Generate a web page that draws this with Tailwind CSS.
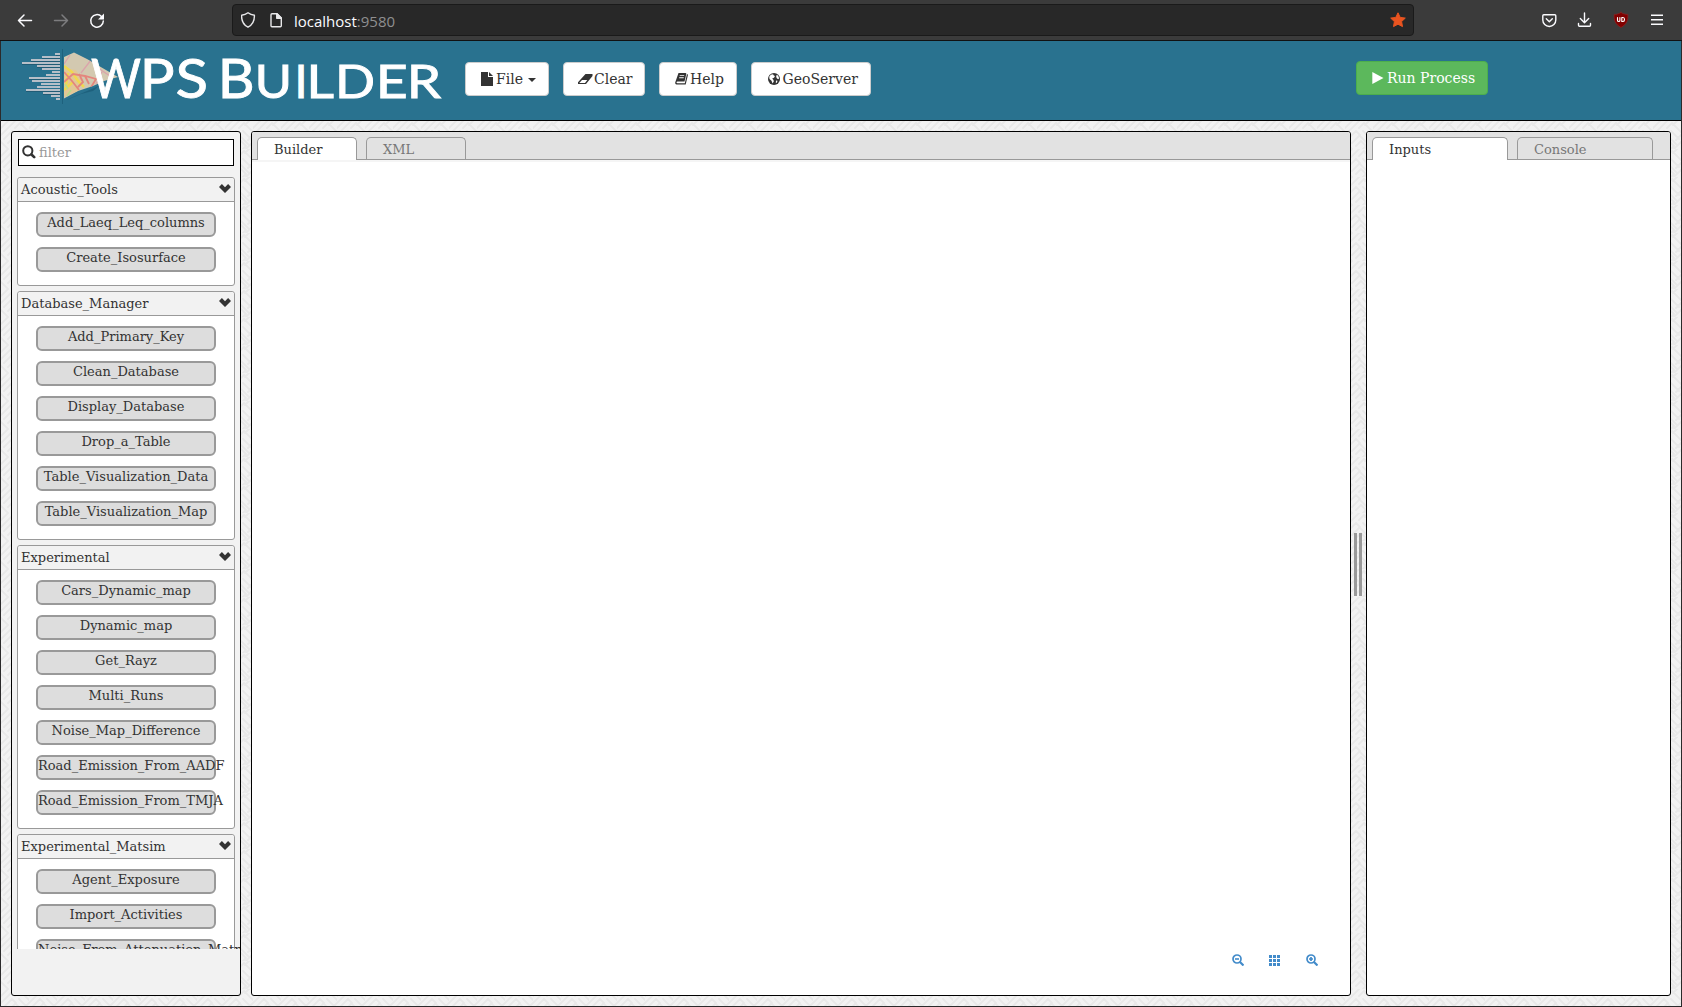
<!DOCTYPE html>
<html lang="en">
<head>
<meta charset="utf-8">
<title>WPS Builder</title>
<script src="https://cdn.jsdelivr.net/npm/@tailwindcss/browser@4"></script>
</head>
<body class="w-[1682px] h-[1007px] overflow-hidden bg-[#2b2a2b] font-['DejaVu_Serif',serif] text-[#333]">
<svg width="0" height="0" class="absolute">
  <defs>
    <symbol id="chev" viewBox="0 0 12 9"><path d="M0 2.900 2.900 0 6 3.200 9.100 0 12 2.900 6 8.900Z"/></symbol>
  </defs>
</svg>
<div class="flex flex-col w-[1682px] h-[1007px] px-px pb-px">
  <!-- browser toolbar -->
  <div class="flex items-center h-[41px] shrink-0 bg-[#3b3b3b] border-b border-[#111] -mx-px pl-4 pr-[18px]">
    <svg class="w-[92px] h-5 shrink-0" viewBox="16 10 92 20" fill="none" stroke="#fbfbfe" stroke-width="1.500" stroke-linecap="round" stroke-linejoin="round">
      <path d="M31.500 20.500H18.500M24 15l-5.500 5.500L24 26"/>
      <path stroke="#7d7d7f" d="M54.500 20.500H67.500M62 15l5.500 5.500L62 26"/>
      <path d="M101.500 16.500A6.300 6.300 0 1 0 103.300 21"/>
      <path fill="#fbfbfe" stroke="none" d="M104 13.500v6h-6Z"/>
    </svg>
    <div class="ml-[124px] w-[1182px] h-8 shrink-0 flex items-center rounded-[4px] bg-[#282828] border border-[#1a1a1a] pl-2 pr-[7px]">
      <svg class="w-[42px] h-5 shrink-0" viewBox="241 10 42 20" fill="none" stroke="#e8e8ea" stroke-width="1.400" stroke-linejoin="round">
        <path d="M248 12.800C250 14.300 252 15 254.400 15.300 254.600 20.500 253.500 24.500 248 27.200 242.500 24.500 241.400 20.500 241.600 15.300 244 15 246 14.300 248 12.800Z"/>
        <path d="M272 13.700h5l4.300 4.300v7.800q0 1-1 1h-8.300q-1 0-1-1v-11.100q0-1 1-1ZM276.800 13.700v4.500h4.500"/><path fill="#e8e8ea" d="M277 13.700v4.300h4.300Z"/>
      </svg>
      <div class="ml-[11px] mt-[2px] font-['Open_Sans',sans-serif] text-[15px] leading-5 text-[#fbfbfe]"><span>localhost</span><span class="text-[#8f8f90]">:9580</span></div>
      <svg class="ml-auto w-4 h-4" viewBox="0 0 16 16" fill="#e95420" stroke="#e95420" stroke-width="1" stroke-linejoin="round"><path d="m8 .8 2.200 4.600 5.100.7-3.700 3.500.9 5L8 12.200 3.500 14.600l.9-5L.7 6.100l5.100-.7Z"/></svg>
    </div>
    <svg class="ml-auto w-[122px] h-5 shrink-0" viewBox="1542 10 122 20" fill="none" stroke="#fbfbfe" stroke-width="1.400" stroke-linecap="round" stroke-linejoin="round">
      <path d="M1543.500 14.700h11q1 0 1 1v4.300a6.500 6.500 0 0 1-13 0v-4.300q0-1 1-1ZM1546 18.700l3 3 3-3" transform="translate(.3 0)"/>
      <path d="M1584.500 13v9.500M1580.300 18.500l4.200 4.200 4.200-4.200M1578.500 23.500v1.700q0 1 1 1h10q1 0 1-1v-1.700"/>
      <path fill="#800000" stroke="#9a2222" stroke-width=".6" d="M1621 12.400c2 1.600 4.600 2 6.800 2 .4 6-1 9.800-6.800 13-5.800-3.200-7.200-7-6.800-13 2.200 0 4.800-.4 6.800-2Z"/>
      <path stroke="#fff" stroke-width="1.100" d="M1617.500 17.500v3q0 1 1.200 1t1.200-1v-3M1621.800 17.500v4h1.200q1.500 0 1.500-2t-1.500-2Z"/>
      <path stroke-linecap="butt" d="M1651 15.200h12M1651 19.700h12M1651 24.200h12"/>
    </svg>
  </div>
  <!-- application header -->
  <header class="flex h-[80px] shrink-0 bg-[#29728f] border-b border-black pl-[19px] pt-[3px]">
    <svg class="w-[430px] h-[66px] shrink-0" viewBox="20 44 430 66">
      <path fill="#14506c" opacity=".5" d="M62 49h1v55h-1zM66 100l28-12 6-3-7 6-12 3-12 5Z"/>
      <path fill="#1a4e66" opacity=".6" d="M56 55h4v1h-4zM42 58h18v1H42zM31 61h29v1H31zM22 64h38v1H22zM37 67h23v1H37zM29 79h31v1H29zM26 91h34v1H26zM43 94h17v1H43z"/>
      <path fill="#b7bfc8" d="M55 53h5v2h-5zM42 56h18v2H42zM31 59h29v2H31zM22 62h38v2H22zM37 65h23v2H37zM42 68h18v2H42zM52 71h8v2h-8zM46 74h14v2H46zM29 77h31v2H29zM32 80h28v2H32zM41 83h19v2H41zM37 86h23v2H37zM26 89h34v2H26zM43 92h17v2H43zM51 95h9v2h-9zM56 98h4v2h-4z"/>
      <clipPath id="land"><path d="M64 57 74 52.500 87 59 118 77 104 81 93 86 78 91 64 98.500Z"/></clipPath>
      <g clip-path="url(#land)" fill="none">
        <path fill="#d3c9b0" d="M60 50h60v50H60z"/>
        <path fill="#e2c795" d="M64 68l12 2 6 10-4 11-14 6Z"/>
        <path stroke="#f0d94e" stroke-width="2.500" d="M64 66l8 6 6 9 6 6M64 90l9-8M68 73l-2 12"/>
        <path stroke="#b9dc8c" stroke-width="1.500" d="M67 96l4-6M65 84l3 5"/>
        <path stroke="#e4867d" stroke-width="1.800" d="M64 82l9-8 12 2 11 3-6 10M64 72l8 9 7 9M79 74l4 8-5 5M85 76l4 8"/>
        <path stroke="#dba3ab" stroke-width="1.300" d="M91 60l-10 13M70 55l-6 9M98 68l12 8M102 72l-6 12"/>
      </g>
      <g id="wordmark" font-family="Lato, sans-serif" fill="#fff" stroke="#fff" stroke-width=".9"></g>
    </svg>
    <nav class="flex gap-[14px] ml-[15px] mt-[18px] h-[34px] text-sm leading-5">
      <button class="flex items-center w-[84px] pl-[15px] rounded-[4px] bg-white border border-[#ccc]">
        <svg class="w-[14px] h-[14px]" viewBox="0 0 14 14" fill="#333"><path d="M0 0h7v5h5v9H0ZM8 0l4 4H8Z"/></svg><span class="ml-px">File</span>
        <span class="ml-[5px] mt-[2px] border-x-4 border-t-4 border-x-transparent border-t-[#333]"></span></button>
      <button class="flex items-center w-[82px] pl-[14px] rounded-[4px] bg-white border border-[#ccc]">
        <svg class="w-[15px] h-[14px]" viewBox="0 0 15 14"><path fill="#333" fill-rule="evenodd" d="M7.500 2h7v2L8 12H0v-1.800ZM7 11l2.300-3H4L1.300 11Z"/></svg><span class="ml-px">Clear</span></button>
      <button class="flex items-center w-[78px] pl-[15px] rounded-[4px] bg-white border border-[#ccc]">
        <svg class="w-[14px] h-[14px]" viewBox="0 0 14 14"><path fill="#333" fill-rule="evenodd" d="M3.500 1H10.500q1 0 .8 1L9.500 9.500H2.500q-1 .2-1 1t1 .8h7.300L12 2l1 .8-2.300 9.700H1.500Q0 12.500.2 10.500ZM4.800 3.200l-.2.900h4.500l.2-.9ZM4.300 5.300l-.2.900h4.500l.2-.9Z"/></svg><span class="ml-px">Help</span></button>
      <button class="flex items-center w-[120px] pl-[15px] rounded-[4px] bg-white border border-[#ccc]">
        <svg class="w-[14px] h-[14px]" viewBox="0 0 14 14"><circle cx="7" cy="7" r="6" fill="#333"/><path fill="#fff" d="m2.200 4.800 1.600-2L6 2.300l.8 1.200 1.200.5-1 1.700-1.800.8L6.500 8l.3 1.500L5.500 11.500l-1-2.800L2.500 7ZM9.500 3l1.600.6 1 2.600-.8 1-1.300-.7-.8-1.500ZM9 8.500l1.500.3-.5 1.700-1.200.8Z"/></svg><span class="ml-[1.500px]">GeoServer</span></button>
    </nav>
    <button class="flex items-center w-[132px] h-[34px] ml-[485px] mt-[17px] pl-[15px] rounded-[4px] bg-[#5cb85c] border border-[#4cae4c] text-white text-sm leading-5">
      <svg class="w-3 h-3" viewBox="0 0 12 12" fill="#fff"><path d="M.3 0 11.500 6 .3 12Z"/></svg><span class="ml-[3px]">Run Process</span></button>
  </header>
  <!-- workspace -->
  <main class="relative flex grow min-h-0 bg-[#f2f2f2]">
    <svg class="absolute inset-0 w-full h-full"><defs><pattern id="weave" width="28" height="28" patternUnits="userSpaceOnUse"><path fill="none" stroke="#e8e8e8" stroke-width="1.800" stroke-linecap="round" stroke-linejoin="round" d="M0 7 7 0M0 14 14 0M3 18l8-8 4 4-8 8M14 7l5-5 9 9M18 10l8 8M14 14l10 10M0 21l7 7M21 28l7-7M11 25l5-5 5 5-3 3M28 14l-5 5M20 4l4-4"/></pattern></defs><rect width="100%" height="100%" fill="url(#weave)"/></svg>
    <div class="relative flex w-full pl-[10px] pt-[10px] pb-[10px]">
      <aside class="w-[230px] h-[865px] shrink-0 bg-[#f2f2f2] border border-black rounded-[3px] pt-[7px] overflow-hidden">
        <div class="flex ml-[6px] w-[216px] h-[27px] border border-black bg-white pl-[3px] items-center">
          <svg class="w-[14px] h-[14px] -mt-[2px]" viewBox="0 0 14 14" fill="none" stroke="#333"><circle cx="5.800" cy="5.800" r="4.600" stroke-width="2"/><path stroke-width="2.600" stroke-linecap="round" d="m9.500 9.500 2.700 2.700"/></svg>
          <span class="ml-[3px] text-[13px] text-[#999]">filter</span>
        </div>
        <div id="list" class="mt-[11px] pl-[5px] h-[772px] overflow-hidden text-[13px] leading-[18px]"></div>
      </aside>
      <section class="ml-[10px] w-[1100px] h-[865px] shrink-0 bg-white border border-black rounded-[3px] overflow-hidden flex flex-col">
        <div class="flex h-[28px] shrink-0 bg-[#e2e2e2] border-b border-[#999] pl-[5px] pt-[5px] gap-[9px] text-[13px] leading-[24px]">
          <div class="w-[100px] h-[23px] bg-white border border-b-0 border-[#999] rounded-t-[5px] pl-4">Builder</div>
          <div class="w-[100px] h-[22px] border border-b-0 border-[#999] rounded-t-[5px] pl-4 text-[#777]">XML</div>
        </div>
        <div class="h-[2px] shrink-0 bg-[#f5f5f5]"></div>
        <div class="grow flex items-end justify-end pr-[32px] pb-[29px] gap-[25px]">
          <svg class="w-3 h-3" viewBox="0 0 12 12" fill="none" stroke="#428bca"><circle cx="5" cy="5" r="4" stroke-width="1.700"/><path stroke-width="2.200" d="m8 8 3.500 3.500"/><path stroke-width="1.600" d="M3 5h4"/></svg>
          <svg class="w-[11px] h-[11px]" viewBox="0 0 11 11" fill="#428bca"><path d="M0 0h3v3H0zM4 0h3v3H4zM8 0h3v3H8zM0 4h3v3H0zM4 4h3v3H4zM8 4h3v3H8zM0 8h3v3H0zM4 8h3v3H4zM8 8h3v3H8z"/></svg>
          <svg class="w-3 h-3 ml-px" viewBox="0 0 12 12" fill="none" stroke="#428bca"><circle cx="5" cy="5" r="4" stroke-width="1.700"/><path stroke-width="2.200" d="m8 8 3.500 3.500"/><path stroke-width="1.700" d="M3 5h4M5 3v4"/></svg>
        </div>
      </section>
      <div class="w-[15px] shrink-0 flex gap-[2px] pl-[3px] pt-[402px]"><i class="w-[3px] h-[63px] bg-[#999]"></i><i class="w-[3px] h-[63px] bg-[#999]"></i></div>
      <section class="w-[305px] h-[865px] shrink-0 bg-white border border-black rounded-[3px] overflow-hidden">
        <div class="flex h-[28px] bg-[#e2e2e2] border-b border-[#999] pl-[5px] pt-[5px] gap-[9px] text-[13px] leading-[24px]">
          <div class="w-[136px] h-[23px] bg-white border border-b-0 border-[#999] rounded-t-[5px] pl-4">Inputs</div>
          <div class="w-[136px] h-[22px] border border-b-0 border-[#999] rounded-t-[5px] pl-4 text-[#777]">Console</div>
        </div>
      </section>
    </div>
  </main>
</div>
<script>
const groups = [
  ['Acoustic_Tools', ['Add_Laeq_Leq_columns', 'Create_Isosurface']],
  ['Database_Manager', ['Add_Primary_Key', 'Clean_Database', 'Display_Database', 'Drop_a_Table', 'Table_Visualization_Data', 'Table_Visualization_Map']],
  ['Experimental', ['Cars_Dynamic_map', 'Dynamic_map', 'Get_Rayz', 'Multi_Runs', 'Noise_Map_Difference', 'Road_Emission_From_AADF', 'Road_Emission_From_TMJA']],
  ['Experimental_Matsim', ['Agent_Exposure', 'Import_Activities', 'Noise_From_Attenuation_Matrix']],
];
document.getElementById('list').innerHTML = groups.map(([name, items]) => `
  <div class="w-[218px] mb-[5px] bg-white border border-[#999] rounded-[3px]">
    <div class="flex justify-between h-[24px] bg-[#f2f2f2] border-b border-[#999] rounded-t-[3px] pl-[3px] pr-[3px] pt-[3px]"><span>${name}</span><svg class="w-3 h-[9px] mt-[3px]" fill="#333"><use href="#chev"/></svg></div>
    <div class="flex flex-col gap-[10px] pt-[10px] pb-[13px] pl-[18px]">${items.map(t => `
      <div class="w-[180px] h-[25px] border-2 border-[#999] bg-[#ddd] rounded-[6px] text-center whitespace-nowrap leading-[17px]">${t}</div>`).join('')}
    </div>
  </div>`).join('');

// Wordmark: each letter is fitted to its left and right edge; [letter, left, right, font size]
const ctx = document.createElement('canvas').getContext('2d');
document.getElementById('wordmark').innerHTML = [
  ['W', 91, 141, 55], ['P', 145, 173.500, 55], ['S', 176.500, 206, 55], ['B', 223, 252, 55],
  ['U', 258, 288.500, 46.500], ['I', 298.500, 303.500, 46.500], ['L', 311, 334, 46.500],
  ['D', 339.500, 373.500, 46.500], ['E', 380.500, 405.500, 46.500], ['R', 411.500, 441, 46.500],
].map(([c, l, r, size]) => {
  ctx.font = `${size}px Lato`;
  const m = ctx.measureText(c);
  const s = (r - l) / (m.actualBoundingBoxRight + m.actualBoundingBoxLeft);
  return `<text font-size="${size}" transform="translate(${l + m.actualBoundingBoxLeft * s} 98) scale(${s} 1)">${c}</text>`;
}).join('');
</script>
</body>
</html>
